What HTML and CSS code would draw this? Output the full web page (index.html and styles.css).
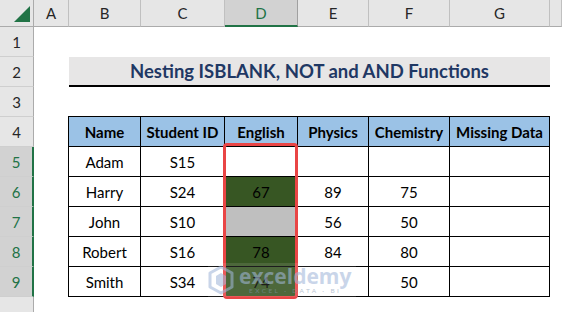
FILE: index.html
```html
<!DOCTYPE html>
<html>
<head>
<meta charset="utf-8">
<link rel="stylesheet" href="styles.css">
</head>
<body>
<div class="sheet">
  <div class="hd corner"><svg class="tri" width="16" height="16" viewBox="0 0 16 16"><polygon points="16,0 16,16 0,16" fill="#217346"/></svg></div>
  <div class="hd ch">A</div>
  <div class="hd ch">B</div>
  <div class="hd ch">C</div>
  <div class="hd ch sel">D</div>
  <div class="hd ch">E</div>
  <div class="hd ch">F</div>
  <div class="hd ch">G</div>
  <div class="hd ch"></div>

  <div class="hd rh">1</div>
  <div></div><div></div><div></div><div></div><div></div><div></div><div></div><div></div>

  <div class="hd rh">2</div>
  <div></div>
  <div class="title">Nesting ISBLANK, NOT and AND Functions</div>
  <div></div>

  <div class="hd rh">3</div>
  <div></div><div></div><div></div><div></div><div></div><div></div><div></div><div></div>

  <div class="hd rh">4</div>
  <div></div>
  <div class="t th first">Name</div>
  <div class="t th">Student ID</div>
  <div class="t th">English</div>
  <div class="t th">Physics</div>
  <div class="t th">Chemistry</div>
  <div class="t th">Missing Data</div>
  <div></div>

  <div class="hd rh sel">5</div>
  <div></div>
  <div class="t first">Adam</div>
  <div class="t">S15</div>
  <div class="t"></div>
  <div class="t"></div>
  <div class="t"></div>
  <div class="t"></div>
  <div></div>

  <div class="hd rh sel">6</div>
  <div></div>
  <div class="t first">Harry</div>
  <div class="t">S24</div>
  <div class="t green">67</div>
  <div class="t">89</div>
  <div class="t">75</div>
  <div class="t"></div>
  <div></div>

  <div class="hd rh sel">7</div>
  <div></div>
  <div class="t first">John</div>
  <div class="t">S10</div>
  <div class="t gray"></div>
  <div class="t">56</div>
  <div class="t">50</div>
  <div class="t"></div>
  <div></div>

  <div class="hd rh sel">8</div>
  <div></div>
  <div class="t first">Robert</div>
  <div class="t">S16</div>
  <div class="t green">78</div>
  <div class="t">84</div>
  <div class="t">80</div>
  <div class="t"></div>
  <div></div>

  <div class="hd rh sel">9</div>
  <div></div>
  <div class="t first">Smith</div>
  <div class="t">S34</div>
  <div class="t green">74</div>
  <div class="t"></div>
  <div class="t">50</div>
  <div class="t"></div>
  <div></div>

  <div class="hd rh"></div>
  <div></div><div></div><div></div><div></div><div></div><div></div><div></div><div></div>

  <div class="redbox"></div>
  <div class="watermark">
    <svg class="wm-logo" width="26" height="30" viewBox="0 0 26 30">
      <path d="M13 2 L24 8 L24 22 L13 28 L2 22 L2 8 Z" fill="none" stroke="#a9bcdc" stroke-width="3" stroke-linejoin="round"/>
      <path d="M8 11 L13 8 L18 11 L18 19 L13 22 L8 19 Z" fill="#a9bcdc"/>
    </svg>
    <div class="wm-text">
      <div class="wm-name">exceldemy</div>
      <div class="wm-sub">EXCEL · DATA · BI</div>
    </div>
  </div>
</div>
</body>
</html>
```
FILE: styles.css
```css
body {
  margin: 0;
  background: #fff;
  overflow: hidden;
  font-family: Lato, "Open Sans", sans-serif;
}

.sheet {
  position: relative;
  width: 562px;
  display: grid;
  grid-template-columns: 34px 35px 72px 84px 73px 71px 81px 100px 1fr;
  grid-template-rows: 27px repeat(10, 30px);
}

.hd {
  box-sizing: border-box;
  background: #e6e6e6;
  color: #262626;
  font-size: 15px;
  display: flex;
  align-items: center;
  justify-content: center;
}

.corner {
  border-right: 1px solid #ababab;
  border-bottom: 1px solid #ababab;
  justify-content: flex-end;
  align-items: flex-end;
  padding: 0 3px 4px 0;
}

.ch {
  border-right: 1px solid #c0c0c0;
  border-bottom: 1px solid #ababab;
}

.rh {
  border-right: 1px solid #ababab;
  border-bottom: 1px solid #cfcfcf;
}

.sel {
  background: #d2d2d2;
  color: #217346;
}

.ch.sel {
  border-bottom: 2px solid #217346;
  border-right-color: #a0a0a0;
}

.rh.sel {
  border-right: 2px solid #217346;
}

.title {
  grid-column: span 6;
  box-sizing: border-box;
  background: #e7e6e6;
  border-bottom: 2px solid #000;
  color: #1f3864;
  font-weight: 700;
  font-size: 18.5px;
  display: flex;
  align-items: center;
  justify-content: center;
}

.t {
  box-sizing: border-box;
  border-right: 1px solid #000;
  border-bottom: 1px solid #000;
  display: flex;
  align-items: center;
  justify-content: center;
  font-size: 15px;
  color: #000;
}

.th {
  background: #9bc2e6;
  font-weight: 700;
  box-shadow: 0 -1px 0 #000;
}

.first {
  box-shadow: -1px 0 0 #000;
}

.th.first {
  box-shadow: -1px 0 0 #000, 0 -1px 0 #000, -1px -1px 0 #000;
}

.green {
  background: #375623;
}

.gray {
  background: #bfbfbf;
}

.redbox {
  position: absolute;
  left: 223px;
  top: 143px;
  width: 75px;
  height: 156px;
  box-sizing: border-box;
  border: 3px solid #e94545;
  border-radius: 4px;
}

.watermark {
  position: absolute;
  left: 208px;
  top: 263px;
  width: 148px;
  height: 34px;
  display: flex;
  align-items: center;
  gap: 5px;
  background: rgba(255, 255, 255, 0.18);
  opacity: 0.62;
}

.wm-text {
  display: flex;
  flex-direction: column;
  align-items: center;
}

.wm-name {
  font-family: "Open Sans", sans-serif;
  font-weight: 700;
  font-size: 21px;
  line-height: 22px;
  color: #a9bcdc;
}

.wm-sub {
  font-size: 6.5px;
  letter-spacing: 2.4px;
  color: #8f9fb8;
  line-height: 8px;
}
```
